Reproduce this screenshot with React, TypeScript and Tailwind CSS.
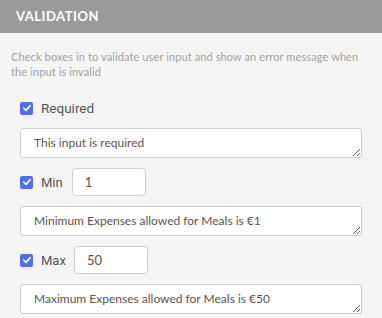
import React from 'react'

function Check() {
  return (
    <span className="flex h-[13px] w-[13px] shrink-0 items-center justify-center rounded-[2px] bg-[#4f6ef2]">
      <svg viewBox="0 0 12 12" className="h-[10px] w-[10px]" fill="none">
        <path d="M2.2 6.3 L4.8 8.8 L9.8 3.2" stroke="white" strokeWidth="2" strokeLinecap="round" strokeLinejoin="round" />
      </svg>
    </span>
  )
}

function Message({ text }: { text: string }) {
  return (
    <textarea
      readOnly
      defaultValue={text}
      rows={1}
      className="block h-[30px] w-[342px] resize-y overflow-hidden rounded-[3px] border border-[#cfcfcf] bg-white px-[13px] py-[6px] text-[12px] leading-[16px] text-[#5a5550] outline-none"
    />
  )
}

function NumberRule({ label, value, inputLeft }: { label: string; value: string; inputLeft: string }) {
  return (
    <div className="flex items-center">
      <Check />
      <span className="ml-[8px] font-['Roboto',sans-serif] text-[13px] text-[#555]">{label}</span>
      <input
        readOnly
        value={value}
        className={`${inputLeft} h-[28px] w-[74px] rounded-[4px] border border-[#cfcfcf] bg-white px-[12px] text-[13px] text-[#5a5550] outline-none`}
      />
    </div>
  )
}

export default function App() {
  return (
    <div className="h-[318px] w-[382px] overflow-hidden bg-[#f4f4f4] font-['Lato',sans-serif]">
      <div className="flex h-[33px] items-center bg-[#9a9a9a] px-[16px]">
        <h2 className="text-[13px] font-bold tracking-[0.04em] text-white">VALIDATION</h2>
      </div>

      <p className="pl-[11px] pr-[16px] pt-[16px] text-[11px] leading-[15px] tracking-[0.01em] text-[#a3a3a3]">
        Check boxes in to validate user input and show an error message when the input is invalid
      </p>

      <div className="px-[20px] pt-[19px]">
        <div className="flex items-center">
          <Check />
          <span className="ml-[8px] font-['Roboto',sans-serif] text-[13.5px] text-[#555]">Required</span>
        </div>

        <div className="mt-[10px]">
          <Message text="This input is required" />
        </div>

        <div className="mt-[10px]">
          <NumberRule label="Min" value="1" inputLeft="ml-[9px]" />
        </div>

        <div className="mt-[10px]">
          <Message text="Minimum Expenses allowed for Meals is €1" />
        </div>

        <div className="mt-[10px]">
          <NumberRule label="Max" value="50" inputLeft="ml-[8px]" />
        </div>

        <div className="mt-[10px]">
          <Message text="Maximum Expenses allowed for Meals is €50" />
        </div>
      </div>
    </div>
  )
}
